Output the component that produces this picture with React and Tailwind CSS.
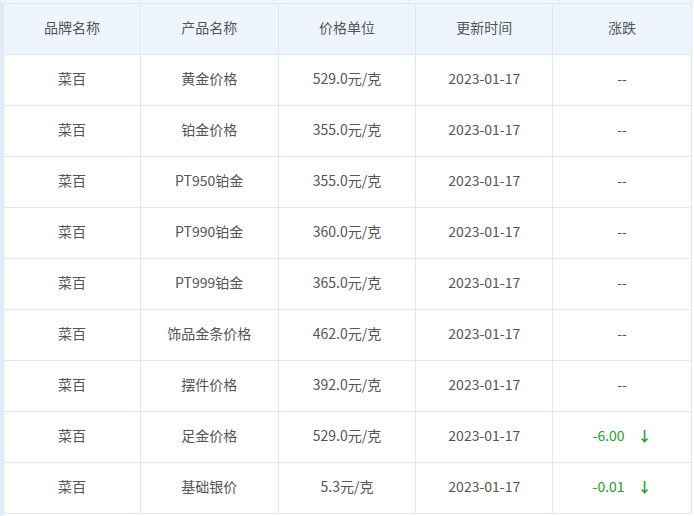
const rows = [
  ["菜百", "黄金价格", "529.0元/克", "2023-01-17", null],
  ["菜百", "铂金价格", "355.0元/克", "2023-01-17", null],
  ["菜百", "PT950铂金", "355.0元/克", "2023-01-17", null],
  ["菜百", "PT990铂金", "360.0元/克", "2023-01-17", null],
  ["菜百", "PT999铂金", "365.0元/克", "2023-01-17", null],
  ["菜百", "饰品金条价格", "462.0元/克", "2023-01-17", null],
  ["菜百", "摆件价格", "392.0元/克", "2023-01-17", null],
  ["菜百", "足金价格", "529.0元/克", "2023-01-17", "-6.00"],
  ["菜百", "基础银价", "5.3元/克", "2023-01-17", "-0.01"],
];

const cols = ["w-[137px]", "w-[138px]", "w-[138px]", "w-[137px]", "w-[138px]"];

function Cell({ w, children, last }) {
  return (
    <div
      className={`${w} h-full pb-[3px] flex items-center justify-center ${last ? "" : "border-r border-[#dce8f7]"}`}
    >
      {children}
    </div>
  );
}

export default function App() {
  return (
    <div
      className="w-[694px] h-[516px] bg-white overflow-hidden text-[14px] text-[#555] border-l-[3px] border-l-[#e1ecf9] border-t-[3px] border-t-[#eef5fd]"
      style={{ fontFamily: '"Noto Sans CJK SC", "Noto Sans", sans-serif' }}
    >
      <div className="w-[689px] border-l border-t border-r border-[#dce8f7]">
        <div className="flex h-[51px] bg-[#eef5fe] border-b border-[#dce8f7]">
          {["品牌名称", "产品名称", "价格单位", "更新时间", "涨跌"].map((h, i) => (
            <Cell key={h} w={cols[i]} last={i === 4}>
              {h}
            </Cell>
          ))}
        </div>
        {rows.map((r, ri) => (
          <div key={ri} className="flex h-[51px] border-b border-[#dce8f7]">
            {r.slice(0, 4).map((c, i) => (
              <Cell key={i} w={cols[i]}>
                {c}
              </Cell>
            ))}
            <Cell w={cols[4]} last>
              {r[4] ? (
                <span className="flex items-center text-[#2a9a2a]">
                  <span>{r[4]}</span>
                  <span className="ml-[13px] font-bold">↓</span>
                </span>
              ) : (
                <span>--</span>
              )}
            </Cell>
          </div>
        ))}
      </div>
    </div>
  );
}
